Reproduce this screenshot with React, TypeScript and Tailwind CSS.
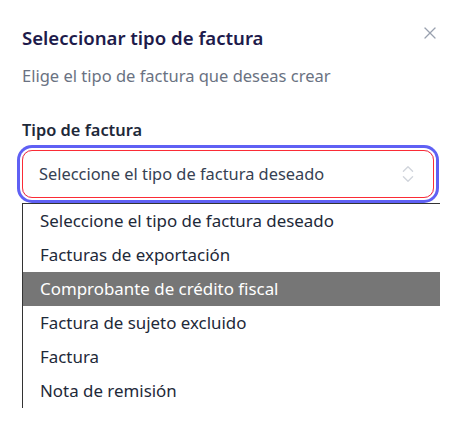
import React, { useState } from 'react';
import { X, ChevronsUpDown } from 'lucide-react';

const OPTIONS = [
  'Seleccione el tipo de factura deseado',
  'Facturas de exportación',
  'Comprobante de crédito fiscal',
  'Factura de sujeto excluido',
  'Factura',
  'Nota de remisión',
];

export default function App() {
  const [hovered] = useState(2);

  return (
    <div className="w-[456px] h-[423px] bg-white overflow-hidden font-['Noto_Sans',sans-serif]">
      <div className="relative px-[22px] pt-[24px]">
        <button className="absolute right-[16px] top-[23px] text-gray-400">
          <X className="h-[20px] w-[20px]" strokeWidth={1.5} />
        </button>

        <h2 className="text-[18.6px] leading-[28px] font-semibold text-[#1e1b4b]">
          Seleccionar tipo de factura
        </h2>
        <p className="mt-[12px] text-[16.5px] leading-[24px] text-gray-500">
          Elige el tipo de factura que deseas crear
        </p>

        <label className="block mt-[30px] text-[16.4px] leading-[24px] font-semibold text-gray-800">
          Tipo de factura
        </label>

        <div className="relative mt-[8px]">
          <div className="flex items-center justify-between h-[48px] rounded-[10px] border border-red-500 ring-[3px] ring-[#5f60f4] ring-offset-2 pl-[16px] pr-[14px]">
            <span className="text-[16.4px] text-gray-700">
              Seleccione el tipo de factura deseado
            </span>
            <ChevronsUpDown className="h-[22px] w-[22px] text-gray-300" strokeWidth={1.5} />
          </div>

          <ul className="absolute left-0 top-[53px] w-[418px] bg-white border-l border-t border-[#333]">
            {OPTIONS.map((opt, i) => (
              <li
                key={opt}
                className={`h-[34px] flex items-center pl-[17px] text-[16.9px] ${
                  i === hovered ? 'bg-[#767676] text-white' : 'text-gray-800'
                }`}
              >
                {opt}
              </li>
            ))}
          </ul>
        </div>
      </div>
    </div>
  );
}
